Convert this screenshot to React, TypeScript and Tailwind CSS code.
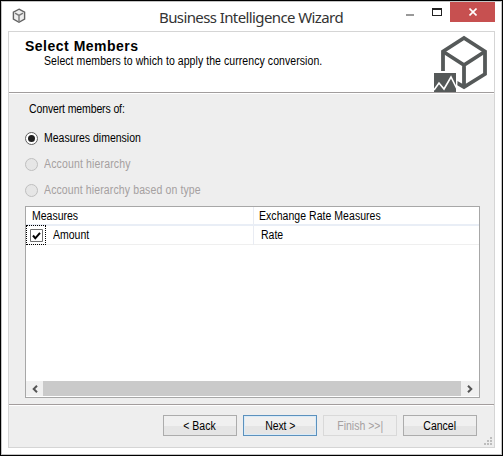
import type { ReactNode } from "react";

function Text({ children, spacing = "tracking-[0px]", origin = "origin-left" }: { children: ReactNode; spacing?: string; origin?: string }) {
  return (
    <span className={`inline-block scale-x-[0.875] font-['Liberation_Sans',Arial,sans-serif] text-[12px] leading-[14px] whitespace-pre ${origin} ${spacing}`}>{children}</span>
  );
}

function Radio({ label, checked = false, spacing }: { label: string; checked?: boolean; spacing?: string }) {
  return (
    <label className={`flex h-[26px] items-center gap-[6px] ${checked ? "text-black" : "text-[#a5a0a0]"}`}>
      <span className={`flex size-[13px] items-center justify-center rounded-full border ${checked ? "border-[#606060] bg-white" : "border-[#bfbfbf] bg-[#e6e6e6]"}`}>
        {checked && <span className="size-[7px] rounded-full bg-[#202020]" />}
      </span>
      <Text spacing={spacing}>{label}</Text>
    </label>
  );
}

function Button({ children, look, spacing }: { children: ReactNode; look: string; spacing?: string }) {
  return (
    <button className={`flex h-[21px] w-[74px] items-center justify-center border ${look}`}>
      <Text spacing={spacing} origin="origin-center">{children}</Text>
    </button>
  );
}

const normal = "border-[#acacac] bg-linear-to-b from-[#f0f0f0] from-50% to-[#e5e5e5] to-50% text-black";

export default function App() {
  return (
    <div className="flex h-[456px] w-[503px] flex-col border border-black bg-white">
      <div className="flex grow flex-col border border-[#c4c4c4] px-[6px] pb-[6px]">
        <div className="flex h-[29px]">
          <svg className="mt-[6px] ml-[4px]" width="14" height="16" viewBox="0 0 14 16" fill="#eee" stroke="#626262" strokeWidth="1.4">
            <path d="M7 1.2 12.6 4.2V11L7 14.3 1.4 11V4.2Z" />
            <path d="M3 5.2 7 7.4 11 5.2M7 7.4V13" fill="none" stroke="#777" />
          </svg>
          <h1 className="mt-[5px] ml-[133px] w-[186px] font-['Noto_Sans','Open_Sans',sans-serif] text-[15px] leading-[20px] tracking-[-0.6px] whitespace-pre text-[#333]">Business Intelligence Wizard</h1>
          <div className="ml-auto flex">
            <span className="mt-[12px] h-[2px] w-[8px] bg-[#999]" />
            <span className="mt-[6px] ml-[18px] h-[8px] w-[10px] border border-t-2 border-[#222]" />
            <span className="ml-[8px] flex h-[20px] w-[45px] items-center justify-center bg-[#c75050]">
              <svg width="8" height="8" viewBox="0 0 8 8" stroke="white" strokeWidth="1.6"><path d="m.5.5 7 7m0-7-7 7" /></svg>
            </span>
          </div>
        </div>
        <main className="flex h-[417px] flex-col border border-[#d5d5d5] bg-[#eeeeee]">
          <header className="flex h-[61px] shrink-0 justify-between border-b border-[#a19d9d] bg-white">
            <div className="pt-[6px] pl-[16px]">
              <h2 className="h-[16px] font-['Liberation_Sans',Arial,sans-serif] text-[14px] leading-[16px] font-bold tracking-[0.5px] whitespace-pre">Select Members</h2>
              <p className="flex pl-[19px]"><Text spacing="tracking-[0.08px]">Select members to which to apply the currency conversion.</Text></p>
            </div>
            <svg className="mr-[4px]" width="58" height="60" viewBox="432 32 58 60" fill="none" stroke="#555959">
              <path d="M443 74V51.5L464 38 485 51.5V74L464 87 456 82.3" strokeWidth="3.8" />
              <path d="m443 51.5 21 13.5 21-13.5M464 65v22" strokeWidth="3.8" />
              <path d="M433 71h25l-1 21H433Z" fill="white" stroke="none" />
              <path d="M434 73h22v19H434Z" fill="#555959" stroke="none" />
              <path d="m434 90 5-7 5 6 7-12 6 12" stroke="white" strokeWidth="1.6" />
            </svg>
          </header>
          <div className="h-px shrink-0 bg-white" />
          <section className="flex flex-col pr-[14px] pl-[16px]">
            <p className="mt-[8px] mb-[9px] ml-[4px] flex"><Text spacing="tracking-[-0.14px]">Convert members of:</Text></p>
            <Radio label="Measures dimension" checked />
            <Radio label="Account hierarchy" spacing="tracking-[0.17px]" />
            <Radio label="Account hierarchy based on type" spacing="tracking-[0.14px]" />
            <div className="mt-[3px] flex h-[192px] w-[455px] flex-col border border-[#a7a7a7] bg-white">
              <div className="grid h-[19px] shrink-0 grid-cols-[228px_1fr] border-b-2 border-[#e9eef6]">
                <div className="flex border-r border-[#e9ecf3] pt-[2px] pl-[6px]"><Text>Measures</Text></div>
                <div className="flex pt-[2px] pl-[5px]"><Text spacing="tracking-[0.05px]">Exchange Rate Measures</Text></div>
              </div>
              <div className="grid h-[19px] shrink-0 grid-cols-[228px_1fr] border-b border-[#efefef]">
                <div className="flex border-r border-[#e9ecf3]">
                  <span className="-mt-px flex size-[20px] shrink-0 items-center justify-center border border-dotted border-black">
                    <svg width="13" height="13" viewBox="0 0 13 13" fill="none">
                      <path d="M.5.5h12v12H.5Z" fill="white" stroke="#707070" />
                      <path d="m3 6.5 2.3 2.8L10 3.8" stroke="black" strokeWidth="2" />
                    </svg>
                  </span>
                  <div className="flex pt-[2px] pl-[7px]"><Text>Amount</Text></div>
                </div>
                <div className="flex pt-[2px] pl-[7px]"><Text>Rate</Text></div>
              </div>
              <div className="mt-auto mb-px flex h-[15px] bg-[#f0f0f0]">
                <span className="flex w-[17px] items-center justify-center"><svg width="6" height="8" viewBox="0 0 6 8" fill="none" stroke="#555" strokeWidth="2"><path d="M5 .7 1.7 4 5 7.3" /></svg></span>
                <span className="w-[418px] bg-[#cacaca]" />
                <span className="flex grow items-center justify-center"><svg width="6" height="8" viewBox="0 0 6 8" fill="none" stroke="#555" strokeWidth="2"><path d="M1 .7 4.3 4 1 7.3" /></svg></span>
              </div>
            </div>
          </section>
          <footer className="mt-[6px] flex grow justify-end border-t border-[#a39d9d] pr-px">
            <div className="flex grow justify-end gap-[6px] border-t border-white pt-[9px]">
              <Button look={normal}>{"< Back"}</Button>
              <Button look="border-[#5c91bd] bg-linear-to-b from-[#f0f0f0] from-50% to-[#e5e5e5] to-50% shadow-[inset_0_0_0_1px_#d9ebf8] text-black" spacing="tracking-[-0.1px]">{"Next >"}</Button>
              <Button look="border-[#d9d9d9] bg-[#eeeeee] text-[#a5a0a0]">{"Finish >>|"}</Button>
              <Button look={normal}>Cancel</Button>
              <svg className="mt-[22px] ml-px" width="9" height="9" viewBox="0 0 9 9" fill="#bdbdbd">
                <path d="M6 0h2v2H6ZM3 3h2v2H3ZM6 3h2v2H6ZM0 6h2v2H0ZM3 6h2v2H3ZM6 6h2v2H6Z" />
              </svg>
            </div>
          </footer>
        </main>
      </div>
    </div>
  );
}
